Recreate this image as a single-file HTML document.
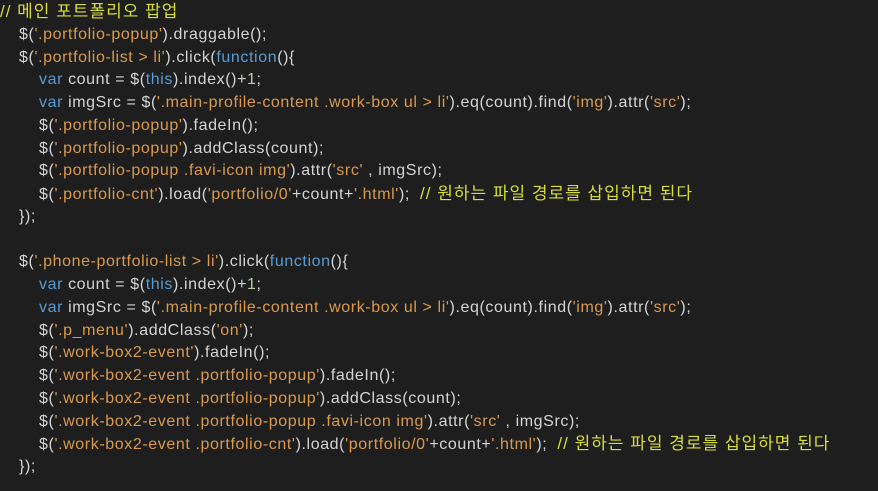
<!DOCTYPE html>
<html><head><meta charset="utf-8"><style>
html,body{margin:0;padding:0;background:#1e1e1e;width:878px;height:491px;overflow:hidden}
.c{position:absolute;left:0;top:1px;font-family:"Liberation Sans","Noto Sans CJK KR",sans-serif;font-size:16px;letter-spacing:0.6px;color:#d4d4d4}
.l{height:22.75px;line-height:22.75px;white-space:pre}
.i1{padding-left:19px}.i2{padding-left:39px}
.s{color:#d99a4e}.k{color:#569cd6}.m{color:#d7de3a;font-size:17px;letter-spacing:1px}.n{color:#b5cea8}
</style></head><body><div class="c"><div class="l m">// 메인 포트폴리오 팝업</div><div class="l i1">$(<span class="s">'.portfolio-popup'</span>).draggable();</div><div class="l i1">$(<span class="s">'.portfolio-list &gt; li'</span>).click(<span class="k">function</span>(){</div><div class="l i2"><span class="k">var</span> count = $(<span class="k">this</span>).index()+<span class="n">1</span>;</div><div class="l i2"><span class="k">var</span> imgSrc = $(<span class="s">'.main-profile-content .work-box ul &gt; li'</span>).eq(count).find(<span class="s">'img'</span>).attr(<span class="s">'src'</span>);</div><div class="l i2">$(<span class="s">'.portfolio-popup'</span>).fadeIn();</div><div class="l i2">$(<span class="s">'.portfolio-popup'</span>).addClass(count);</div><div class="l i2">$(<span class="s">'.portfolio-popup .favi-icon img'</span>).attr(<span class="s">'src'</span> , imgSrc);</div><div class="l i2">$(<span class="s">'.portfolio-cnt'</span>).load(<span class="s">'portfolio/0'</span>+count+<span class="s">'.html'</span>);  <span class="m">// 원하는 파일 경로를 삽입하면 된다</span></div><div class="l i1">});</div><div class="l"> </div><div class="l i1">$(<span class="s">'.phone-portfolio-list &gt; li'</span>).click(<span class="k">function</span>(){</div><div class="l i2"><span class="k">var</span> count = $(<span class="k">this</span>).index()+<span class="n">1</span>;</div><div class="l i2"><span class="k">var</span> imgSrc = $(<span class="s">'.main-profile-content .work-box ul &gt; li'</span>).eq(count).find(<span class="s">'img'</span>).attr(<span class="s">'src'</span>);</div><div class="l i2">$(<span class="s">'.p_menu'</span>).addClass(<span class="s">'on'</span>);</div><div class="l i2">$(<span class="s">'.work-box2-event'</span>).fadeIn();</div><div class="l i2">$(<span class="s">'.work-box2-event .portfolio-popup'</span>).fadeIn();</div><div class="l i2">$(<span class="s">'.work-box2-event .portfolio-popup'</span>).addClass(count);</div><div class="l i2">$(<span class="s">'.work-box2-event .portfolio-popup .favi-icon img'</span>).attr(<span class="s">'src'</span> , imgSrc);</div><div class="l i2">$(<span class="s">'.work-box2-event .portfolio-cnt'</span>).load(<span class="s">'portfolio/0'</span>+count+<span class="s">'.html'</span>);  <span class="m">// 원하는 파일 경로를 삽입하면 된다</span></div><div class="l i1">});</div></div></body></html>
